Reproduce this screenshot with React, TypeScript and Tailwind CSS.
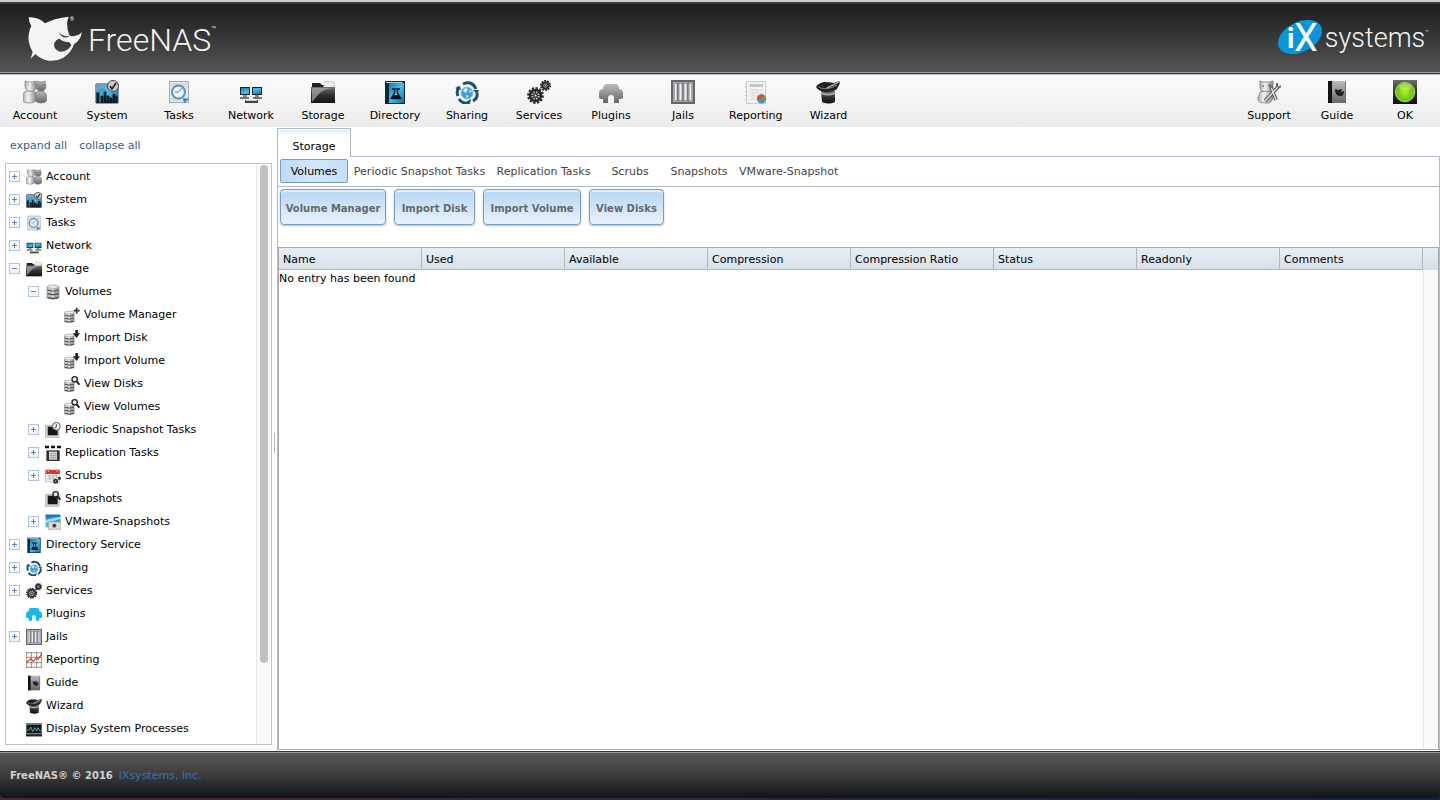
import { useState } from "react";
import type { ReactNode } from "react";

type IconName =
  | "account"
  | "system"
  | "tasks"
  | "network"
  | "storage"
  | "directory"
  | "sharing"
  | "services"
  | "plugins"
  | "pluginsBlue"
  | "jails"
  | "reporting"
  | "chart"
  | "wizard"
  | "support"
  | "guide"
  | "ok"
  | "volumes"
  | "volumeAdd"
  | "volumeImport"
  | "volumeView"
  | "periodic"
  | "replication"
  | "scrubs"
  | "snapshots"
  | "vmware"
  | "processes";

type TreeNode = {
  label: string;
  icon: IconName;
  level: 0 | 1 | 2;
  state?: "open" | "closed";
};

const toolbar: { label: string; icon: IconName }[] = [
  { label: "Account", icon: "account" },
  { label: "System", icon: "system" },
  { label: "Tasks", icon: "tasks" },
  { label: "Network", icon: "network" },
  { label: "Storage", icon: "storage" },
  { label: "Directory", icon: "directory" },
  { label: "Sharing", icon: "sharing" },
  { label: "Services", icon: "services" },
  { label: "Plugins", icon: "plugins" },
  { label: "Jails", icon: "jails" },
  { label: "Reporting", icon: "reporting" },
  { label: "Wizard", icon: "wizard" },
];

const toolbarRight: { label: string; icon: IconName }[] = [
  { label: "Support", icon: "support" },
  { label: "Guide", icon: "guide" },
  { label: "OK", icon: "ok" },
];

const tree: TreeNode[] = [
  { label: "Account", icon: "account", level: 0, state: "closed" },
  { label: "System", icon: "system", level: 0, state: "closed" },
  { label: "Tasks", icon: "tasks", level: 0, state: "closed" },
  { label: "Network", icon: "network", level: 0, state: "closed" },
  { label: "Storage", icon: "storage", level: 0, state: "open" },
  { label: "Volumes", icon: "volumes", level: 1, state: "open" },
  { label: "Volume Manager", icon: "volumeAdd", level: 2 },
  { label: "Import Disk", icon: "volumeImport", level: 2 },
  { label: "Import Volume", icon: "volumeImport", level: 2 },
  { label: "View Disks", icon: "volumeView", level: 2 },
  { label: "View Volumes", icon: "volumeView", level: 2 },
  { label: "Periodic Snapshot Tasks", icon: "periodic", level: 1, state: "closed" },
  { label: "Replication Tasks", icon: "replication", level: 1, state: "closed" },
  { label: "Scrubs", icon: "scrubs", level: 1, state: "closed" },
  { label: "Snapshots", icon: "snapshots", level: 1 },
  { label: "VMware-Snapshots", icon: "vmware", level: 1, state: "closed" },
  { label: "Directory Service", icon: "directory", level: 0, state: "closed" },
  { label: "Sharing", icon: "sharing", level: 0, state: "closed" },
  { label: "Services", icon: "services", level: 0, state: "closed" },
  { label: "Plugins", icon: "pluginsBlue", level: 0 },
  { label: "Jails", icon: "jails", level: 0, state: "closed" },
  { label: "Reporting", icon: "chart", level: 0 },
  { label: "Guide", icon: "guide", level: 0 },
  { label: "Wizard", icon: "wizard", level: 0 },
  { label: "Display System Processes", icon: "processes", level: 0 },
];

const indent = ["pl-[3px]", "pl-[22px]", "pl-[41px]"];

const subTabs = [
  { label: "Volumes", width: "min-w-[68px]" },
  { label: "Periodic Snapshot Tasks", width: "min-w-[143px]" },
  { label: "Replication Tasks", width: "min-w-[105px]" },
  { label: "Scrubs", width: "min-w-[68px]" },
  { label: "Snapshots", width: "min-w-[70px]" },
  { label: "VMware-Snapshot", width: "min-w-[68px]" },
];

const actions = [
  { label: "Volume Manager", width: "min-w-[106px]" },
  { label: "Import Disk", width: "min-w-[81px]" },
  { label: "Import Volume", width: "min-w-[98px]" },
  { label: "View Disks", width: "min-w-[75px]" },
];

const columns = [
  "Name",
  "Used",
  "Available",
  "Compression",
  "Compression Ratio",
  "Status",
  "Readonly",
  "Comments",
];

const disks = (
  <g>
    <path d="M3 4q9-4 18 0v17q-9 4-18 0z" fill="url(#silver)" stroke="#888" />
    <ellipse cx="12" cy="4" rx="8.5" ry="2.5" fill="#f0f0f0" stroke="#999" />
    <path d="M4 9q8 3 16 0M4 14.500q8 3 16 0M4 20q8 3 16 0" fill="none" stroke="#444" strokeWidth="1.800" />
    <path d="M9 8v13M15 8v13" stroke="#777" strokeWidth="1.300" />
  </g>
);

const smallDisks = <g transform="translate(-2 5) scale(.82)">{disks}</g>;

const magnifier = (
  <g fill="none" stroke="#222">
    <circle cx="16" cy="5" r="4" fill="#eee" strokeWidth="2" />
    <path d="m19 8 4 5" strokeWidth="3" />
  </g>
);

const snapshotBox = (
  <g>
    <path d="M1 5h20v18H1z" fill="#ddd" stroke="#999" />
    <path d="M4 7h15v13H4z" fill="#16161a" />
  </g>
);

const plug = "M4 6q0-5 4-5h8q4 0 4 5h1q3 1 3 4v4q0 2-2 2h-2v4h-5v-5q0-3-3-3t-3 3v5H4v-4H2q-2 0-2-2v-4q0-3 3-4z";

const icons: Record<IconName, ReactNode> = {
  account: (
    <g stroke="#777" strokeWidth=".7">
      <path d="M13 1l3 1h3l3-1 1 5q0 5-5 5t-5-5z" fill="url(#steel)" />
      <path d="M12 13q2-2 6-2t5 3l1 6q-1 3-6 3t-6-3z" fill="url(#steel)" />
      <path d="M2 1l3 1h4l3-1 1 5q0 6-5 6T2 6z" fill="url(#silver)" />
      <path d="M0 14q1-3 7-3t6 3v6q-1 3-7 3t-6-3z" fill="url(#silver)" />
      <path d="M5 5h1M9 5h1M15 5h1M19 5h2" stroke="#666" />
    </g>
  ),
  system: (
    <g>
      <path d="M1 4h22v19H1z" fill="url(#blue)" stroke="#34434d" />
      <path d="M1 12 8 8l7 4 8-6V4H1z" fill="#84a6bd" opacity=".8" />
      <path d="M2 23V13h2v10M6 23v-7h2v7M9 23V12h2v11M12 23v-7h2v7M15 23v-5h2v5M18 23V14h2v9M21 23v-7h1v7" fill="#101820" stroke="#101820" strokeWidth=".9" />
      <circle cx="18" cy="6" r="5.500" fill="#ccc" stroke="#444" />
      <path d="m15 6 2 3 4-6" fill="none" stroke="#222" strokeWidth="1.700" />
    </g>
  ),
  tasks: (
    <g>
      <path d="M2.500 1.500h19v21h-19z" fill="#e4e9e9" stroke="#a1acae" />
      <path d="M4 4h16M4 6h16M4 9h16M4 18h13M4 20h13" stroke="#bdc8c9" strokeWidth=".8" />
      <circle cx="11.500" cy="12" r="6.500" fill="#e9f3fa" stroke="#5a93bf" strokeWidth="2" />
      <path d="M11.500 12l4-4M11.500 12H8" fill="none" stroke="#61839d" />
      <path d="m16 18 6 1-5 4z" fill="#258ac5" />
    </g>
  ),
  network: (
    <g transform="translate(0 2)">
      <path d="M1 5h10v8H1zM13 5h10v8H13z" fill="#17242c" />
      <path d="M2 6h8v6H2zM14 6h8v6h-8z" fill="url(#blue)" />
      <path d="M4 13h4v2H4zM16 13h4v2h-4z" fill="#8a8a8a" />
      <path d="M1 15h9v2H1zM14 15h9v2h-9z" fill="#777" />
      <path d="M6 18h13v3H6z" fill="#444" />
      <path d="M7 18h11v1H7z" fill="#ccc" />
    </g>
  ),
  storage: (
    <g>
      <path d="M1 3h8l2 2h12v9H1z" fill="#222" />
      <path d="m13 5 1-4 9 1v6H12z" fill="#eee" stroke="#aaa" strokeWidth=".5" />
      <path d="M0 7h24v16H0z" fill="url(#black)" />
      <path d="M1 8h22Q13 8 7 15l-6 7z" fill="#aaa" opacity=".7" />
    </g>
  ),
  directory: (
    <g>
      <path d="M2 1h20v23H2z" fill="#122831" />
      <path d="M6 3h15v20H6z" fill="url(#blue)" />
      <path d="M3 2h17l-1 1H3z" fill="#b9cfd6" />
      <path d="M9 9h8M11.500 9v4l-3 5h9l-3-5V9M8 18.500h10" fill="none" stroke="#081216" strokeWidth="1.400" />
      <path d="M11 15h4l2 3H9z" fill="#111" />
    </g>
  ),
  sharing: (
    <g fill="none" stroke="#1e516e" strokeWidth="3">
      <circle cx="12" cy="13" r="6" fill="#3d9fd6" stroke="#8ec3df" strokeWidth="1" />
      <path d="m8 11 2-3 3 1-2 4zM14 10l3 1-2 2zM11 15l3 1-2 2z" fill="#d2effd" stroke="none" />
      <path d="M3 16q-2-5 1-9M8 4q9-4 13 5M22 13q1 5-4 8M14 23q-7 1-10-4" />
      <path d="m0 8 5-2 1 4zM18 10h6l-2 4zM16 19l-1 5-4-2z" fill="#1e516e" stroke="none" />
    </g>
  ),
  services: (
    <g fill="none" stroke="#292929">
      <circle cx="8.500" cy="15.500" r="7.300" strokeWidth="2.200" strokeDasharray="2.300 1.500" />
      <circle cx="8.500" cy="15.500" r="5.500" fill="#bbb" strokeWidth="2.500" />
      <path d="M8.500 10v11M3 15.500h11M4.500 11.500l8 8M12.500 11.500l-8 8" strokeWidth="1.100" />
      <circle cx="8.500" cy="15.500" r="1.500" fill="#eee" />
      <circle cx="18.500" cy="5.500" r="4.700" strokeWidth="1.700" strokeDasharray="1.800 1.100" />
      <circle cx="18.500" cy="5.500" r="3.200" fill="#999" strokeWidth="2" />
      <circle cx="18.500" cy="5.500" r="1" fill="#ddd" />
    </g>
  ),
  plugins: <path transform="translate(0 3)" d={plug} fill="url(#steel)" />,
  pluginsBlue: <path transform="translate(0 2)" d={plug} fill="#16b8ea" />,
  jails: (
    <g>
      <path d="M1 1h22v22H1z" fill="#eee" stroke="#666" strokeWidth="2" />
      <path d="M3 3h18v18H3z" fill="none" stroke="#a4a4a9" strokeWidth="2" />
      <path d="M7 3v18M12 3v18M17 3v18" stroke="#777a80" strokeWidth="2.600" />
      <path d="M8 4v16M13 4v16M18 4v16" stroke="#b9b9be" strokeWidth=".7" />
    </g>
  ),
  reporting: (
    <g>
      <path d="M2.500 1.500h19v22h-19z" fill="#f2f2f2" stroke="#ccc" />
      <path d="M6 4h13v3H6z" fill="#c5c5c5" />
      <path d="M6 10h13M6 13h13M6 16h13M6 19h10M9 9v11M13 9v11" stroke="#d9d9d9" />
      <path d="M2 3v20" stroke="#aaa" strokeDasharray="1 3" />
      <circle cx="17.500" cy="19" r="4.500" fill="#438fd0" />
      <path d="M17.500 19 13 19a4.500 4.500 0 0 1 7-4z" fill="#e34b31" />
      <path d="m17.500 19 3-4q3 3 1 6z" fill="#5ba846" />
    </g>
  ),
  chart: (
    <g fill="none">
      <path d="M0 1h24M0 8h24M0 16h24M0 23h24M1 0v24M8 0v24M16 0v24M23 0v24" stroke="#666" />
      <path d="m0 17 7-7 4 4 5-6 2 3 6-9" stroke="#e0482c" strokeWidth="2" />
    </g>
  ),
  wizard: (
    <g>
      <path d="M5 11h14v11q-6 3-13 0z" fill="url(#black)" />
      <path d="M5 12q7 3 14 0v2q-7 3-14 0z" fill="#aaa" />
      <path d="M0 7q2-4 8-5 6 0 10 1l5-2 1 2-3 6q-3 3-12 3-7-1-9-5z" fill="#222" />
      <path d="M2 7q9 4 19-2" fill="none" stroke="#777" strokeWidth="1.200" />
      <path d="m11 8 12-6" stroke="#ccc" strokeWidth="1.100" />
    </g>
  ),
  support: (
    <g>
      <path d="m3 1 3 1h7l3-1v6q-1 5-7 5T3 7z" fill="url(#silver)" stroke="#777" strokeWidth=".8" />
      <path d="M3 12q6-2 12 0l1 5q-1 7-8 6-8 0-7-5z" fill="url(#silver)" stroke="#777" strokeWidth=".8" />
      <path d="M5 6h2M11 6h2" fill="none" stroke="#555" />
      <path d="m8 21 13-14M14 7l5 13" stroke="#555" strokeWidth="3.500" />
      <path d="m8 21 13-14M14 7l5 13" stroke="#ddd" strokeWidth="1.600" />
      <path d="m20 7 0-4M21 8l3-2M14 8l-1-4" stroke="#666" strokeWidth="2" />
    </g>
  ),
  guide: (
    <g>
      <path d="M3 1h18v22H3z" fill="url(#steel)" />
      <path d="M3 1h4v22H3z" fill="#121212" />
      <path d="m10 9 3 1 4-1-1 3 3-1q0 6-5 5-4-1-4-7z" fill="#222" />
      <path d="M20.500 2v20" stroke="#777" />
    </g>
  ),
  ok: (
    <g>
      <path d="M0 0h24v24H0z" fill="url(#black)" />
      <circle cx="12" cy="12" r="10.500" fill="#51604a" />
      <circle cx="12" cy="12" r="9.500" fill="url(#green)" stroke="#c5f98b" strokeWidth=".7" />
      <ellipse cx="12" cy="7" rx="6" ry="3.500" fill="#e6ff9c" opacity=".4" />
    </g>
  ),
  volumes: disks,
  volumeAdd: (
    <g>
      {smallDisks}
      <path d="M19 1v9M14.500 5.500h9" stroke="#333" strokeWidth="2.500" />
    </g>
  ),
  volumeImport: (
    <g>
      {smallDisks}
      <path d="M17 0h4v5h3l-5 7-6-7h4z" fill="#222" />
    </g>
  ),
  volumeView: (
    <g>
      {smallDisks}
      {magnifier}
    </g>
  ),
  periodic: (
    <g>
      {snapshotBox}
      <circle cx="17" cy="6.500" r="5.800" fill="#f3f3f3" stroke="#555" strokeWidth="1.500" />
      <path d="M17 3v5l-3 1" fill="none" stroke="#333" strokeWidth="1.300" />
    </g>
  ),
  replication: (
    <g>
      <path d="M0 1h6v4H0zM9 1h6v4H9zM18 1h6v4h-6z" fill="#111" />
      <path d="M2 8h20v16H2z" fill="#333" />
      <path d="M6 10h12v12H6z" fill="#ddd" />
      <path d="M7 13h10M7 16h10M7 19h10" stroke="#777" />
    </g>
  ),
  scrubs: (
    <g>
      <path d="M1 3h21v18H1z" fill="#f4f4f4" stroke="#aaa" />
      <path d="M1 3h21v6H1z" fill="#df3328" />
      <path d="M5 1v5M18 1v5" stroke="#aaa" strokeWidth="2" />
      <path d="M4 12h15M4 16h12M7 10v9M12 10v9M17 10v5" stroke="#999" />
      <circle cx="16" cy="20" r="2.500" fill="#aaa" stroke="#333" strokeWidth="2.500" />
      <circle cx="21.500" cy="15.500" r="1.500" fill="#aaa" stroke="#333" strokeWidth="2" />
    </g>
  ),
  snapshots: (
    <g>
      {snapshotBox}
      {magnifier}
    </g>
  ),
  vmware: (
    <g>
      <path d="M1 1h22v19H1z" fill="url(#blue)" />
      <path d="M1 1h22v4H1z" fill="#2373b5" />
      <path d="m1 9 22-5v3L1 14z" fill="#9fddf5" />
      <path d="M5 12h19v11H5z" fill="#ddd" stroke="#999" />
      <circle cx="14" cy="17.500" r="4" fill="#888" stroke="#fff" />
      <circle cx="14" cy="17.500" r="2" fill="#222" />
    </g>
  ),
  processes: (
    <g>
      <path d="M0 3h24v20H0z" fill="#777" />
      <path d="M1 6h22v12H1z" fill="#15191d" />
      <path d="m1 14 4-1 2-4 3 7 3-6 3 5 2-5 2 4h4" fill="none" stroke="#4cb4d5" strokeWidth="1.300" />
      <path d="M0 20h24v3H0z" fill="#222" />
    </g>
  ),
};

// shared paints, referenced by id from every icon
function Paints() {
  return (
    <svg className="absolute size-0" aria-hidden="true">
      <defs>
        <linearGradient id="silver" x2="1">
          <stop stopColor="#b0b0b0" />
          <stop offset=".4" stopColor="#f3f3f3" />
          <stop offset="1" stopColor="#8d8d8d" />
        </linearGradient>
        <linearGradient id="steel" x2="0" y2="1">
          <stop stopColor="#bcbcbc" />
          <stop offset="1" stopColor="#666" />
        </linearGradient>
        <linearGradient id="black" x2="0" y2="1">
          <stop stopColor="#707070" />
          <stop offset=".5" stopColor="#303030" />
          <stop offset="1" stopColor="#111" />
        </linearGradient>
        <linearGradient id="blue" x2="1" y2="1">
          <stop stopColor="#187ba9" />
          <stop offset=".5" stopColor="#3fc0ee" />
          <stop offset="1" stopColor="#0b6e9b" />
        </linearGradient>
        <radialGradient id="green">
          <stop stopColor="#b5eb23" />
          <stop offset="1" stopColor="#62bd12" />
        </radialGradient>
      </defs>
    </svg>
  );
}

function Icon({ name, className }: { name: IconName; className: string }) {
  return (
    <svg viewBox="0 0 24 24" className={`shrink-0 ${className}`} aria-hidden="true">
      {icons[name]}
    </svg>
  );
}

function ToolbarButton({ label, icon, className }: { label: string; icon: IconName; className: string }) {
  return (
    <button type="button" className={`flex flex-col items-center pt-[5px] ${className}`}>
      <Icon name={icon} className="size-6" />
      <span className="mt-[5px] leading-[14px]">{label}</span>
    </button>
  );
}

function Header() {
  return (
    <header className="flex h-[74px] shrink-0 items-center justify-between border-t-2 border-b border-t-[#c9cacb] border-b-[#3c3c3e] bg-linear-to-b from-[#1b1b1b] to-[#565656] pr-[11px] pl-7 text-[#f4f4f4] shadow-[inset_0_2px_0_#3b3b3b,inset_0_-1px_0_#999]">
      <a href="#home" className="flex items-center gap-[6px]" aria-label="FreeNAS">
        <svg width="54" height="45" viewBox="84 50 162 135" fill="currentColor" className="mt-[2px] overflow-visible" aria-hidden="true">
          <path
            fillRule="evenodd"
            d="M86 54q29-2 49 18 30-16 71-20-10 23 2 56 4 4 14 2 16-2 23-12-1 22-23 37-8 25-32 40-20 12-45 9-23-4-39-20l-14 14 6-20q-16-28-12-53 3-17 8-25-8-12-8-26zM206 128q-16 0-28-10-13 4-16 17 0 17 18 22 23 1 34-19-2-6-8-10zM176 97q10 15 33 14-10 5-19 3-9-4-14-17z"
          />
          <text x="209" y="64" fontSize="17" className="font-['Roboto']">®</text>
        </svg>
        <span className="flex pt-1 font-['Roboto'] text-[32px] leading-[40px] font-light">
          FreeNAS
          <sup className="top-0 text-[8px] leading-[20px]">™</sup>
        </span>
      </a>
      <a href="#ixsystems" className="flex items-center gap-[3px]" aria-label="iXsystems">
        <svg width="44" height="36" viewBox="0 0 44 36" className="overflow-visible" aria-hidden="true">
          <ellipse cx="22" cy="17" rx="23.500" ry="15" fill="#0796db" transform="rotate(-27 22 17)" />
          <g fill="#fff" className="font-['Liberation_Sans_Narrow','Roboto']">
            <text x="9" y="28" fontSize="28" fontWeight="700">i</text>
            <text x="16" y="31" fontSize="38">X</text>
          </g>
        </svg>
        <span className="flex font-['Roboto'] text-[27px] leading-[36px] font-light">
          systems
          <sup className="top-0 text-[6px] leading-[24px]">™</sup>
        </span>
      </a>
    </header>
  );
}

function Sidebar() {
  return (
    <nav className="flex w-[272px] shrink-0 flex-col pb-[6px] pl-[5px]">
      <div className="flex h-9 shrink-0 items-center gap-3 pt-[2px] pl-[5px] text-[#31628f]">
        <button type="button">expand all</button>
        <button type="button">collapse all</button>
      </div>
      <div className="flex min-h-0 flex-1 border border-[#c5c5c5]">
        <ul className="min-w-0 flex-1 overflow-hidden pt-px">
          {tree.map((node) => (
            <li key={`${node.level}-${node.label}`} className={`flex h-[23px] items-center ${indent[node.level]}`}>
              {node.state ? (
                <button
                  type="button"
                  aria-label={`${node.state === "open" ? "Collapse" : "Expand"} ${node.label}`}
                  className="flex size-[11px] items-center justify-center border border-[#b5c4e0] bg-linear-to-b from-white to-[#edf2fb]"
                >
                  <svg width="5" height="5" viewBox="0 0 5 5" stroke="#6681b5" aria-hidden="true">
                    <path d={node.state === "open" ? "M0 2.500h5" : "M0 2.500h5M2.500 0v5"} />
                  </svg>
                </button>
              ) : (
                <span className="w-[11px]" />
              )}
              <a href="#tree" className="ml-[6px] flex h-[17px] items-end gap-1 whitespace-nowrap">
                <Icon name={node.icon} className="size-4" />
                <span className="leading-[17px]">{node.label}</span>
              </a>
            </li>
          ))}
        </ul>
        <div className="w-[15px] border-l border-[#e8e8e8] bg-[#fafafa] pt-px pl-[3px]">
          <div className="h-[86%] w-2 rounded-full bg-[#c1c1c1]" />
        </div>
      </div>
    </nav>
  );
}

function VolumesTable() {
  return (
    <div className="mt-[22px] flex min-h-0 flex-1 border border-[#a9a9b0]">
      <table className="w-full flex-1 table-fixed border-separate border-spacing-0 self-start">
        <thead>
          <tr className="bg-linear-to-b from-[#e9eef4] to-[#d6e0ea]">
            {columns.map((column) => (
              <th
                key={column}
                className="h-[22px] border-r border-b border-[#b4b7bd] pt-[2px] pb-0 pl-1 text-left leading-[16px] font-normal"
              >
                {column}
              </th>
            ))}
          </tr>
        </thead>
        <tbody>
          <tr>
            <td colSpan={columns.length} className="leading-[17px]">
              No entry has been found
            </td>
          </tr>
        </tbody>
      </table>
      <div className="flex w-[15px] shrink-0 flex-col">
        <div className="h-[22px] bg-linear-to-b from-[#e9eef4] to-[#d3e0eb]" />
        <div className="flex-1 border-l border-[#e6e6e6] bg-[#fafafa]" />
      </div>
    </div>
  );
}

export default function App() {
  const [active, setActive] = useState("Volumes");

  return (
    <div className="flex h-screen flex-col overflow-hidden bg-white font-['Verdana','DejaVu_Sans',sans-serif] text-[11px] text-black">
      <Paints />
      <Header />

      <div className="flex h-[53px] shrink-0 justify-between border-t border-[#b4b8c8] bg-linear-to-b from-[#fcfcfc] to-[#ececec]">
        <div className="flex gap-[2px]">
          {toolbar.map((item) => (
            <ToolbarButton key={item.label} {...item} className="min-w-[70px] px-[9px]" />
          ))}
        </div>
        <div className="flex pr-px">
          {toolbarRight.map((item) => (
            <ToolbarButton key={item.label} {...item} className="min-w-[68px]" />
          ))}
        </div>
      </div>

      <div className="flex min-h-0 flex-1">
        <Sidebar />
        <div className="flex w-[5px] shrink-0 items-center justify-center pt-2">
          <div className="h-5 w-px bg-[#b4b8c8]" />
        </div>

        <main className="flex min-w-0 flex-1 flex-col pt-px">
          <div role="tablist" className="flex h-[29px] shrink-0">
            <button
              type="button"
              role="tab"
              aria-selected="true"
              className="min-w-[74px] border border-b-0 border-[#b4b8c8] bg-linear-to-b from-[#dcecfa] to-white to-25% pt-2 shadow-[inset_0_1px_0_#fff]"
            >
              Storage
            </button>
            <div className="flex-1 border-b border-[#b4b8c8]" />
          </div>

          <div className="flex min-h-0 flex-1 flex-col border-x border-[#b4b8c8] pb-px">
            <div role="tablist" className="flex h-[30px] shrink-0 items-start border-b border-[#b4b8c8] pt-[2px] pl-[2px]">
              {subTabs.map((tab) => (
                <button
                  key={tab.label}
                  type="button"
                  role="tab"
                  aria-selected={active === tab.label}
                  onClick={() => setActive(tab.label)}
                  className={`h-6 rounded-[2px] border px-1 pt-[2px] whitespace-nowrap ${tab.width} ${
                    active === tab.label
                      ? "border-[#759dc0] bg-linear-to-r from-[#bcdaf6] via-[#d2e7fb] to-[#c5e0f8] text-black"
                      : "border-transparent text-[#444]"
                  }`}
                >
                  {tab.label}
                </button>
              ))}
            </div>

            <div className="flex shrink-0 gap-2 pt-[2px] pl-[2px]">
              {actions.map((action) => (
                <button
                  key={action.label}
                  type="button"
                  className={`h-9 rounded-[4px] border border-[#759dc0] bg-linear-to-b from-[#b5d5f3] to-[#eaf3fc] pt-[2px] text-[10px] font-bold whitespace-nowrap text-[#686868] shadow-[0_1px_2px_#bbb,inset_0_2px_1px_#e4f0fb] ${action.width}`}
                >
                  {action.label}
                </button>
              ))}
            </div>

            <VolumesTable />
          </div>
        </main>
      </div>

      <div className="h-[49px] shrink-0 bg-linear-to-r from-[#452a38] to-[#14203f] pb-[2px]">
        <footer className="flex h-full items-baseline gap-[6px] rounded-b-[4px] border-t border-[#333] bg-linear-to-b from-[#5a5a5a] via-[#3c3c3c] to-[#111418] pt-4 pl-[10px] shadow-[inset_0_1px_0_#999]">
          <strong className="text-[10px] text-[#d0d0d0]">FreeNAS® © 2016</strong>
          <a href="#company" className="text-[#3a71ae]">iXsystems, Inc.</a>
        </footer>
      </div>
    </div>
  );
}
